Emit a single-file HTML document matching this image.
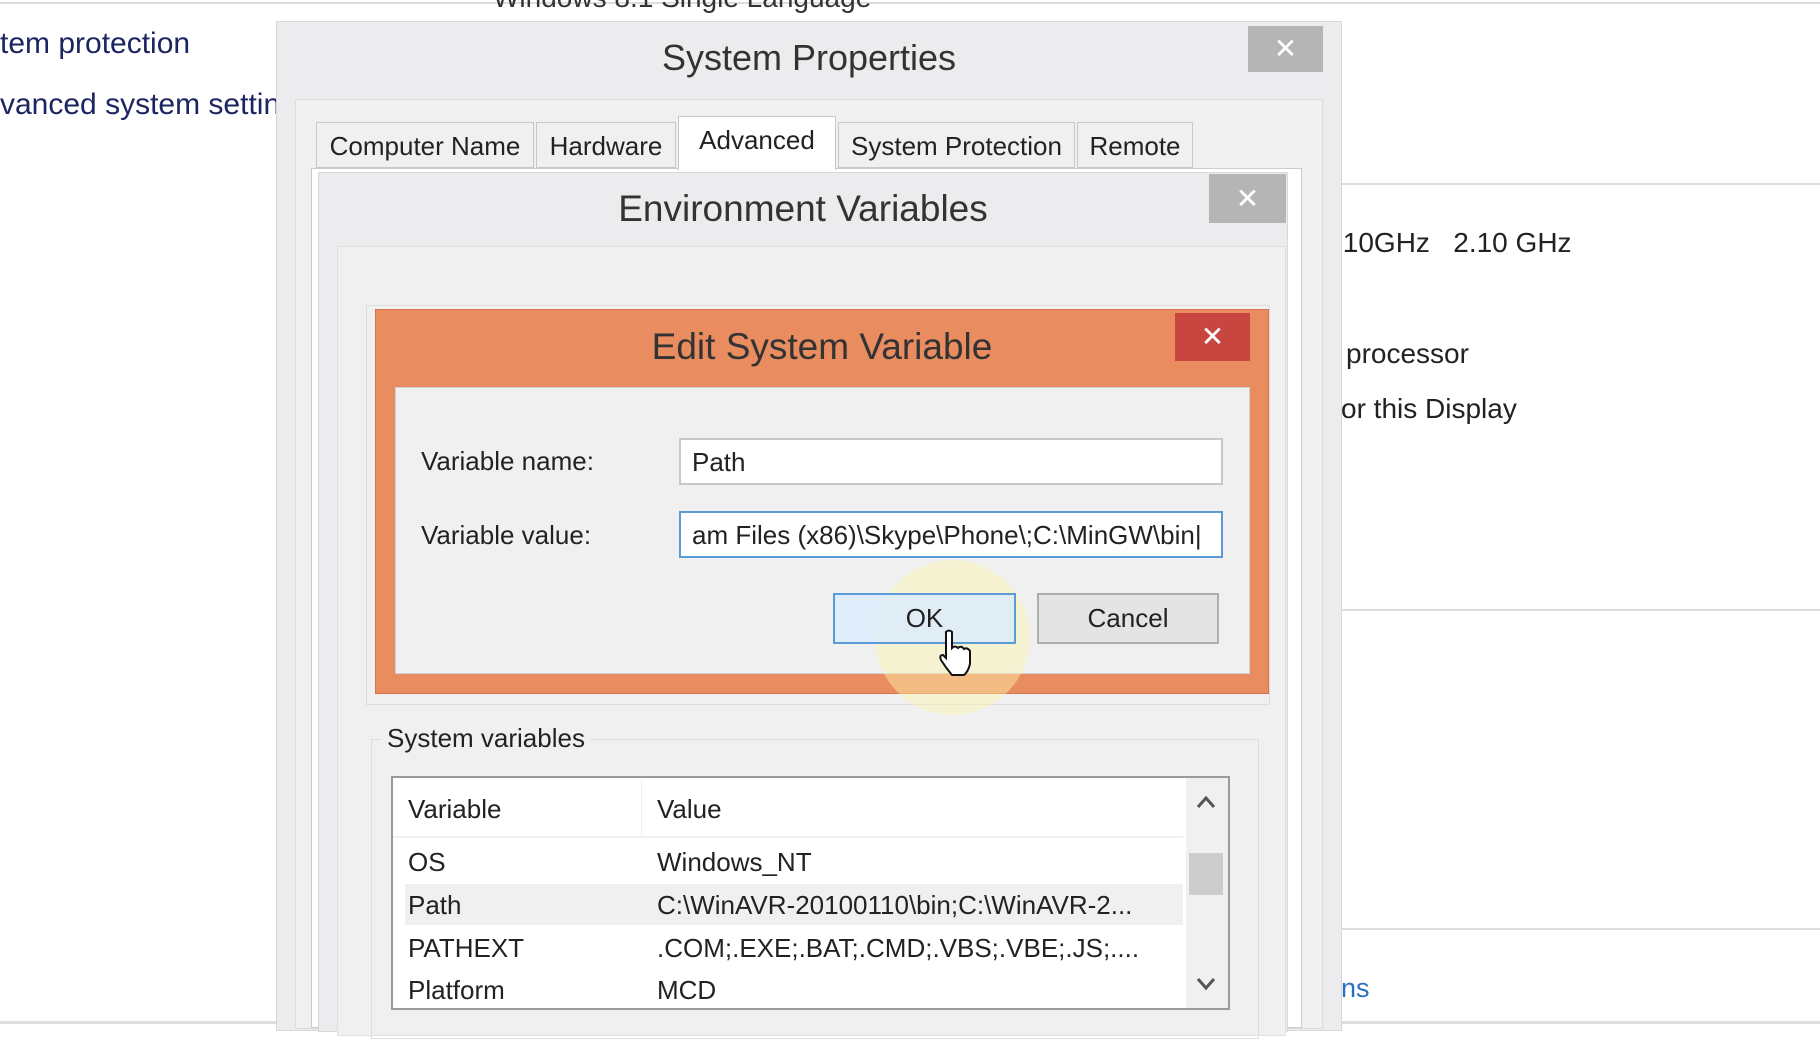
<!DOCTYPE html>
<html><head><meta charset="utf-8"><style>
*{margin:0;padding:0;box-sizing:border-box}
body{width:1820px;height:1024px;overflow:hidden;background:#fff;position:relative;font-family:"Liberation Sans Narrow","Liberation Sans",sans-serif;color:#222}
.a{position:absolute;white-space:nowrap}
.t{font-size:27px}
</style></head><body>
<div class="a" style="left:0;top:2px;width:1820px;height:2px;background:#ddd"></div>
<div class="a t" style="left:493px;top:-18px;font-size:28px;color:#333">Windows 8.1 Single Language</div>
<div class="a" style="left:0;top:27px;font-size:30px;color:#1c2560">tem protection</div>
<div class="a" style="left:0;top:88px;font-size:30px;color:#1c2560">vanced system settin</div>
<!-- right side -->
<div class="a" style="left:1342px;top:183px;width:478px;height:2px;background:#ddd"></div>
<div class="a" style="left:1335px;top:227px;font-size:28px;color:#222">.10GHz &nbsp; 2.10 GHz</div>
<div class="a" style="left:1346px;top:338px;font-size:28px">processor</div>
<div class="a" style="left:1341px;top:393px;font-size:28px">or this Display</div>
<div class="a" style="left:1342px;top:609px;width:478px;height:2px;background:#ddd"></div>
<div class="a" style="left:1342px;top:928px;width:478px;height:2px;background:#ddd"></div>
<div class="a t" style="left:1341px;top:973px;color:#2a6fc0">ns</div>
<div class="a" style="left:0;top:1021px;width:1820px;height:3px;background:#ddd"></div>
<!-- System properties -->
<div class="a" style="left:276px;top:21px;width:1066px;height:1010px;background:#ececee;border:1px solid #d8d8d8"></div>
<div class="a" style="left:276px;top:37px;width:1066px;text-align:center;font-size:36px;color:#333">System Properties</div>
<div class="a" style="left:1248px;top:26px;width:75px;height:46px;background:#b5b5b5;color:#fff;font-size:28px;text-align:center;line-height:46px">✕</div>
<div class="a" style="left:295px;top:99px;width:1028px;height:930px;background:#f0f0f0;border:1px solid #dcdcdc"></div>
<div class="a" style="left:311px;top:168px;width:991px;height:860px;background:#fff;border:1px solid #ccc"></div>
<div class="a" style="left:316px;top:122px;width:218px;height:46px;background:#f0f0f0;border:1px solid #c8c8c8;font-size:26px;text-align:center;line-height:46px">Computer Name</div>
<div class="a" style="left:536px;top:122px;width:140px;height:46px;background:#f0f0f0;border:1px solid #c8c8c8;font-size:26px;text-align:center;line-height:46px">Hardware</div>
<div class="a" style="left:678px;top:116px;width:158px;height:54px;background:#fff;border:1px solid #c8c8c8;border-bottom:none;font-size:26px;text-align:center;line-height:46px">Advanced</div>
<div class="a" style="left:838px;top:122px;width:237px;height:46px;background:#f0f0f0;border:1px solid #c8c8c8;font-size:26px;text-align:center;line-height:46px">System Protection</div>
<div class="a" style="left:1077px;top:122px;width:116px;height:46px;background:#f0f0f0;border:1px solid #c8c8c8;font-size:26px;text-align:center;line-height:46px">Remote</div>
<!-- Env vars -->
<div class="a" style="left:318px;top:172px;width:970px;height:860px;background:#ececee;border:1px solid #d8d8d8"></div>
<div class="a" style="left:318px;top:188px;width:970px;text-align:center;font-size:37px;color:#333">Environment Variables</div>
<div class="a" style="left:1209px;top:174px;width:77px;height:49px;background:#b5b5b5;color:#fff;font-size:28px;text-align:center;line-height:49px">✕</div>
<div class="a" style="left:337px;top:246px;width:949px;height:790px;background:#f0f0f0;border:1px solid #e0e0e0"></div>
<div class="a" style="left:366px;top:305px;width:904px;height:400px;border:1px solid #ddd"></div>
<div class="a" style="left:371px;top:739px;width:888px;height:300px;border:1px solid #ddd"></div>
<div class="a" style="left:382px;top:723px;background:#f0f0f0;padding:0 5px;font-size:26px">System variables</div>
<div class="a" style="left:391px;top:776px;width:839px;height:234px;background:#fff;border:2px solid #9a9a9a"></div>
<div class="a" style="left:393px;top:778px;width:790px;height:60px;border-bottom:2px solid #f0f0f0"></div>
<div class="a" style="left:641px;top:780px;width:1px;height:56px;background:#eee"></div>
<div class="a" style="left:408px;top:794px;font-size:26px">Variable</div>
<div class="a" style="left:657px;top:794px;font-size:26px">Value</div>
<div class="a" style="left:405px;top:884px;width:778px;height:41px;background:#f0f0f0"></div>
<div class="a" style="left:408px;top:847px;font-size:26px">OS</div><div class="a" style="left:657px;top:847px;font-size:26px">Windows_NT</div>
<div class="a" style="left:408px;top:890px;font-size:26px">Path</div><div class="a" style="left:657px;top:890px;font-size:26px">C:\WinAVR-20100110\bin;C:\WinAVR-2...</div>
<div class="a" style="left:408px;top:933px;font-size:26px">PATHEXT</div><div class="a" style="left:657px;top:933px;font-size:26px">.COM;.EXE;.BAT;.CMD;.VBS;.VBE;.JS;....</div>
<div class="a" style="left:408px;top:975px;font-size:26px">Platform</div><div class="a" style="left:657px;top:975px;font-size:26px">MCD</div>
<div class="a" style="left:1186px;top:778px;width:42px;height:230px;background:#f0f0f0"></div>
<div class="a" style="left:1189px;top:853px;width:34px;height:42px;background:#cdcdcd"></div>
<svg class="a" style="left:1196px;top:795px" width="20" height="14"><path d="M2 12 L10 3 L18 12" stroke="#555" stroke-width="3" fill="none"/></svg>
<svg class="a" style="left:1196px;top:977px" width="20" height="14"><path d="M2 2 L10 11 L18 2" stroke="#555" stroke-width="3" fill="none"/></svg>
<!-- Edit dialog -->
<div class="a" style="left:375px;top:309px;width:894px;height:385px;background:#e98c5f;border:1px solid #d6754a"></div>
<div class="a" style="left:375px;top:326px;width:894px;text-align:center;font-size:37px;color:#333">Edit System Variable</div>
<div class="a" style="left:1175px;top:313px;width:75px;height:48px;background:#c8463f;color:#fff;font-size:28px;text-align:center;line-height:48px">✕</div>
<div class="a" style="left:395px;top:387px;width:855px;height:287px;background:#f0f0f0;border:1px solid #d0d0d0"></div>
<div class="a" style="left:421px;top:446px;font-size:26px">Variable name:</div>
<div class="a" style="left:421px;top:520px;font-size:26px">Variable value:</div>
<div class="a" style="left:679px;top:438px;width:544px;height:47px;background:#fff;border:2px solid #c8c8c8;font-size:26px;padding:7px 11px">Path</div>
<div class="a" style="left:679px;top:511px;width:544px;height:47px;background:#fff;border:2px solid #5c9ad6;font-size:26px;padding:7px 11px;overflow:hidden">am Files (x86)\Skype\Phone\;C:\MinGW\bin|</div>
<div class="a" style="left:875px;top:560px;width:155px;height:155px;border-radius:50%;background:rgba(250,245,170,.45)"></div>
<div class="a" style="left:833px;top:593px;width:183px;height:51px;background:rgba(220,236,252,.85);border:2px solid #5c9ad6;font-size:26px;text-align:center;line-height:47px">OK</div>
<div class="a" style="left:1037px;top:593px;width:182px;height:51px;background:#e4e4e4;border:2px solid #adadad;font-size:26px;text-align:center;line-height:47px">Cancel</div>
<svg class="a" style="left:938px;top:628px" width="36" height="50"><path d="M8 4 Q11 1 14 4 L14 20 Q17 17 20 20 Q23 17 26 21 Q29 19 32 23 L32 36 Q30 44 26 47 L14 47 Q8 40 3 32 Q1 27 5 27 L8 30 Z" fill="#fff" stroke="#111" stroke-width="2"/></svg>
</body></html>
